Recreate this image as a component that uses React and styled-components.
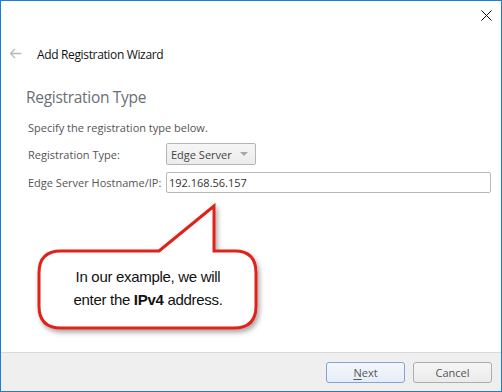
import React from "react";
import styled, { createGlobalStyle } from "styled-components";

const GlobalStyle = createGlobalStyle`
  html, body {
    margin: 0;
    padding: 0;
    background: #fff;
  }
  body {
    font-family: "Open Sans", "Noto Sans", "Liberation Sans", sans-serif;
  }
`;

const Window = styled.div`
  position: relative;
  width: 502px;
  height: 392px;
  box-sizing: border-box;
  border: 1px solid #1a7fd4;
  display: flex;
  flex-direction: column;
  background: #fff;
  overflow: hidden;
`;

const TitleBar = styled.div`
  height: 30px;
  display: flex;
  justify-content: flex-end;
  align-items: flex-start;
  padding: 9px 9px 0 0;
  box-sizing: border-box;
`;

const CloseButton = styled.div`
  width: 11px;
  height: 11px;
  display: flex;
`;

const Header = styled.div`
  height: 46px;
  display: flex;
  align-items: center;
  padding-left: 8px;
`;

const BackArrow = styled.div`
  width: 13px;
  height: 11px;
  display: flex;
  margin-right: 15px;
  margin-top: -1px;
`;

const WizardTitle = styled.div`
  font-size: 12px;
  letter-spacing: -0.35px;
  color: #111;
`;

const Content = styled.div`
  flex: 1;
  padding: 9px 10px 0 25px;
`;

const SectionTitle = styled.div`
  font-size: 15.5px;
  letter-spacing: -0.3px;
  line-height: 22px;
  color: #6a6f77;
  margin-bottom: 12px;
`;

const Description = styled.div`
  font-size: 11px;
  line-height: 16px;
  color: #555;
  margin: 0 0 7px 2px;
`;

const Row = styled.div`
  display: flex;
  align-items: center;
  margin: 0 0 7px 2px;
`;

const Label = styled.div`
  width: 138px;
  flex-shrink: 0;
  font-size: 11px;
  color: #555;
`;

const Dropdown = styled.div`
  width: 90px;
  height: 22px;
  box-sizing: border-box;
  border: 1px solid #b5b5b5;
  border-radius: 2px;
  background: linear-gradient(#f6f6f6, #ececec);
  display: flex;
  align-items: center;
  justify-content: space-between;
  padding: 0 7px 0 4px;
  font-size: 11px;
  color: #444;
`;

const Caret = styled.div`
  width: 0;
  height: 0;
  border-left: 4px solid transparent;
  border-right: 4px solid transparent;
  border-top: 4px solid #a8a8a8;
`;

const TextInput = styled.div`
  width: 326px;
  height: 21px;
  box-sizing: border-box;
  border: 1px solid #b9b9b9;
  border-radius: 2px;
  background: #fff;
  display: flex;
  align-items: center;
  padding-left: 2px;
  font-size: 11px;
  color: #333;
`;

const Footer = styled.div`
  height: 38px;
  border-top: 1px solid #dadada;
  background: #efefef;
  display: flex;
  align-items: center;
  justify-content: flex-end;
  gap: 8px;
  padding-right: 9px;
`;

const Button = styled.div`
  width: ${(p) => p.$w}px;
  height: 21px;
  box-sizing: border-box;
  border: 1px solid ${(p) => (p.$primary ? "#7ea6d8" : "#adadad")};
  border-radius: 3px;
  background: ${(p) =>
    p.$primary
      ? "linear-gradient(#f4f7fc, #e6edf7)"
      : "linear-gradient(#f6f6f6, #ebebeb)"};
  display: flex;
  align-items: center;
  justify-content: center;
  font-size: 11px;
  color: #555;

  u {
    text-decoration-thickness: 1px;
    text-underline-offset: 2px;
  }
`;

const Callout = styled.div`
  position: absolute;
  left: 29px;
  top: 194px;
  width: 240px;
  height: 145px;
`;

const CalloutShape = styled.svg`
  position: absolute;
  inset: 0;
`;

const CalloutText = styled.div`
  position: absolute;
  left: 9px;
  width: 218px;
  top: 70px;
  text-align: center;
  font-family: "Liberation Sans", Arial, sans-serif;
  font-size: 15px;
  line-height: 23px;
  color: #111;
  letter-spacing: -0.3px;

  b {
    font-weight: bold;
  }
`;

export default function App() {
  return (
    <>
      <GlobalStyle />
      <Window>
        <TitleBar>
          <CloseButton>
            <svg width="11" height="11" viewBox="0 0 11 11">
              <path d="M0.5 0.5 L10.5 10.5 M10.5 0.5 L0.5 10.5" stroke="#111" strokeWidth="1" />
            </svg>
          </CloseButton>
        </TitleBar>
        <Header>
          <BackArrow>
            <svg width="13" height="11" viewBox="0 0 13 11">
              <path d="M12.5 5.5 H1.5 M6 1 L1.5 5.5 L6 10" stroke="#b8b8b8" strokeWidth="1.3" fill="none" />
            </svg>
          </BackArrow>
          <WizardTitle>Add Registration Wizard</WizardTitle>
        </Header>
        <Content>
          <SectionTitle>Registration Type</SectionTitle>
          <Description>Specify the registration type below.</Description>
          <Row>
            <Label>Registration Type:</Label>
            <Dropdown>
              <span>Edge Server</span>
              <Caret />
            </Dropdown>
          </Row>
          <Row>
            <Label>Edge Server Hostname/IP:</Label>
            <TextInput>192.168.56.157</TextInput>
          </Row>
        </Content>
        <Footer>
          <Button $w={79} $primary>
            <span>
              <u>N</u>ext
            </span>
          </Button>
          <Button $w={79}>Cancel</Button>
        </Footer>
        <Callout>
          <CalloutShape width="240" height="145" viewBox="29 194 240 145">
            <defs>
              <filter id="sh" x="-10%" y="-10%" width="130%" height="130%">
                <feDropShadow dx="2" dy="3" stdDeviation="2.5" floodColor="#000" floodOpacity="0.35" />
              </filter>
            </defs>
            <path
              d="M158 250 L213 205 L213 250 L234 250 Q255 250 255 272 L255 305 Q255 327 233 327 L60 327 Q38 327 38 305 L38 272 Q38 250 60 250 Z"
              fill="#fff"
              stroke="#e0221b"
              strokeWidth="3"
              strokeLinejoin="miter"
              filter="url(#sh)"
            />
          </CalloutShape>
          <CalloutText>
            In our example, we will
            <br />
            enter the <b>IPv4</b> address.
          </CalloutText>
        </Callout>
      </Window>
    </>
  );
}
